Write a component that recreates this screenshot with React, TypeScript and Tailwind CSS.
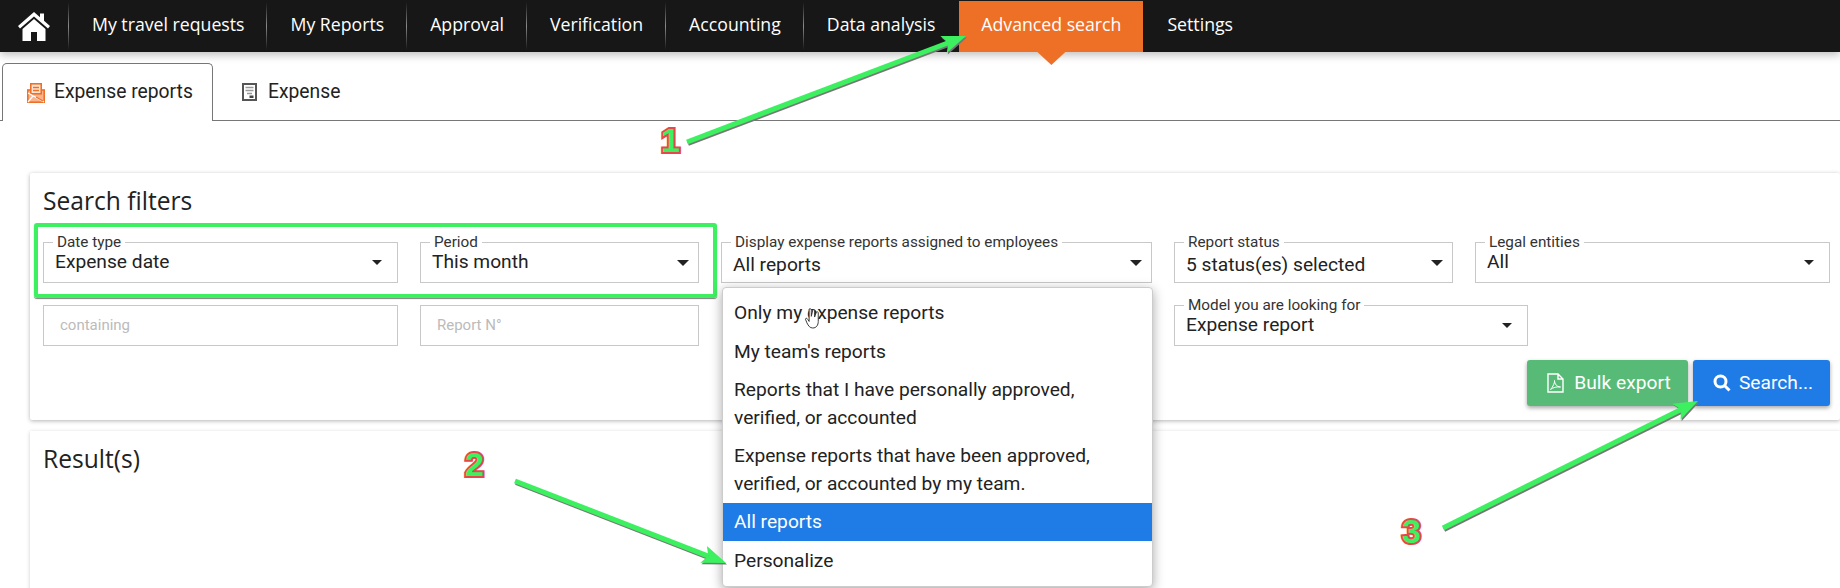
const navItems = ["My travel requests", "My Reports", "Approval", "Verification", "Accounting", "Data analysis"];

function Separator() {
  return <span className="my-[2px] w-px bg-linear-to-b from-transparent via-[#8a8a8a] to-transparent" />;
}

function SelectField({ label, value, className, small, low }: { label: string; value: string; className: string; small?: boolean; low?: boolean }) {
  return (
    <div className={"relative h-[41px] shrink-0 border border-[#c8c8c8] bg-white pl-[11px] " + (small ? "pr-[15px] " : "pr-[9px] ") + className}>
      <span className="absolute left-[9px] top-[-9px] bg-white px-[4px] text-[15.3px] leading-[16px] text-[#333]">{label}</span>
      <div className="flex h-full items-center justify-between text-[19.2px] text-[#222]">
        <span className={low ? "pt-[5px]" : ""}>{value}</span>
        <span className={small ? "border-x-[5px] border-t-[5px] border-x-transparent border-t-[#222]" : "border-x-[6px] border-t-[6px] border-x-transparent border-t-[#222]"} />
      </div>
    </div>
  );
}

function NumberMark({ n, className }: { n: string; className: string }) {
  return (
    <span className={"absolute z-20 font-bold text-[34px] leading-none text-[#3df05f] font-['Liberation_Sans',sans-serif] [-webkit-text-stroke:4px_#e8464a] [paint-order:stroke_fill] " + className}>{n}</span>
  );
}

function Arrow({ x1, y1, x2, y2 }: { x1: number; y1: number; x2: number; y2: number }) {
  const angle = Math.atan2(y2 - y1, x2 - x1);
  const len = 24;
  const ax = x2 - len * Math.cos(angle);
  const ay = y2 - len * Math.sin(angle);
  const nx = -Math.sin(angle) * 9;
  const ny = Math.cos(angle) * 9;
  const bx = x2 - (len - 5) * Math.cos(angle);
  const by = y2 - (len - 5) * Math.sin(angle);
  const head = (dx: number, dy: number) =>
    `${x2 + dx},${y2 + dy} ${ax + nx + dx},${ay + ny + dy} ${bx + dx},${by + dy} ${ax - nx + dx},${ay - ny + dy}`;
  return (
    <g>
      <line x1={x1 + 1} y1={y1 + 1.5} x2={bx + 1} y2={by + 1.5} stroke="#777" strokeWidth="5" />
      <polygon points={head(1, 1.5)} fill="#777" />
      <line x1={x1} y1={y1} x2={bx} y2={by} stroke="#3df05f" strokeWidth="5" />
      <polygon points={head(0, 0)} fill="#3df05f" />
    </g>
  );
}

export default function App() {
  return (
    <div className="relative h-[588px] w-[1840px] overflow-hidden bg-white font-['Roboto',sans-serif] text-[#222]">
      <nav className="relative z-10 flex h-[52px] items-stretch bg-[#171717] font-['Open_Sans',sans-serif] text-[17.7px] text-white shadow-[0_3px_8px_rgba(0,0,0,0.25)]">
        <div className="flex w-[68px] items-center justify-center">
          <svg width="34" height="30" viewBox="0 0 34 30" fill="white">
            <path d="M17 1 L1 15 L3 17.5 L17 5.5 L31 17.5 L33 15 L27 9.8 V2.5 H23 V6.3 Z" />
            <path d="M17 8 L5.5 18 V30 H14 V21 H20 V30 H28.5 V18 Z" />
          </svg>
        </div>
        <Separator />
        {navItems.map((item, i) => (
          <div key={item} className="contents">
            <div className="flex items-center pb-[4px] pl-[23px] pr-[22px]">{item}</div>
            {i < navItems.length - 1 && <Separator />}
          </div>
        ))}
        <div className="relative ml-[2px] mt-[1px] flex items-center bg-[#ee7027] px-[22px] pb-[4px]">
          Advanced search
          <span className="absolute left-1/2 top-full h-[13px] w-[28px] -translate-x-1/2 bg-[#ee7027] [clip-path:polygon(0_0,100%_0,50%_100%)]" />
        </div>
        <div className="flex items-center pb-[4px] pl-[24px] pr-[23px]">Settings</div>
      </nav>

      <div className="flex h-[69px] items-end border-b border-[#777] pl-[2px] text-[19.3px]">
        <div className="mb-[-1px] flex h-[58px] w-[211px] items-center gap-[9px] rounded-t-[5px] border border-b-0 border-[#777] bg-white pl-[24px]">
          <svg width="18" height="20" viewBox="0 0 18 20">
            <rect x="0.8" y="7" width="16.4" height="12.2" fill="#f9b48d" stroke="#ee7027" strokeWidth="1.6" />
            <rect x="3.8" y="0.8" width="10.4" height="10" fill="#fde3d3" stroke="#ee7027" strokeWidth="1.6" />
            <path d="M6 4.5 H12 M6 7.5 H12" stroke="#ee7027" strokeWidth="1.4" />
            <path d="M1 10 L10 15 M17 19 L8 14 M1 19 L6 13" fill="none" stroke="#fff" strokeWidth="1.2" />
            <path d="M9 14 L16 18" stroke="#ee7027" strokeWidth="1.2" />
          </svg>
          Expense reports
        </div>
        <div className="mb-[-1px] flex h-[58px] items-center gap-[11px] pl-[29px]">
          <svg width="15" height="18" viewBox="0 0 15 18" fill="none">
            <rect x="1" y="1" width="13" height="16" stroke="#555" strokeWidth="2" />
            <path d="M3.5 4.5 H11.5 M3.5 7.5 H11.5 M5 10.5 H10" stroke="#999" strokeWidth="1.6" />
            <rect x="7.5" y="12.5" width="4" height="2.5" fill="#444" />
          </svg>
          Expense
        </div>
      </div>

      <section className="mb-[11px] ml-[30px] mt-[52px] h-[247px] rounded-[2px] bg-white pl-[13px] pr-[10px] pt-[12px] shadow-[0_1px_4px_rgba(0,0,0,0.3)]">
        <h2 className="font-['Open_Sans',sans-serif] text-[24.6px] leading-[32px]">Search filters</h2>
        <div className="mt-[25px] flex">
          <SelectField label="Date type" value="Expense date" className="w-[355px]" small />
          <SelectField label="Period" value="This month" className="ml-[22px] w-[279px]" />
          <SelectField label="Display expense reports assigned to employees" value="All reports" className="ml-[22px] w-[431px]" low />
          <SelectField label="Report status" value="5 status(es) selected" className="ml-[22px] w-[279px]" low />
          <SelectField label="Legal entities" value="All" className="ml-[22px] w-[355px]" small />
        </div>
        <div className="mt-[22px] flex">
          <div className="flex h-[41px] w-[355px] shrink-0 items-center border border-[#c8c8c8] px-[16px] text-[15px] text-[#bbb]">containing</div>
          <div className="ml-[22px] flex h-[41px] w-[279px] shrink-0 items-center border border-[#c8c8c8] px-[16px] text-[15px] text-[#bbb]">Report N°</div>
          <SelectField label="Model you are looking for" value="Expense report" className="ml-[475px] w-[354px]" small />
        </div>
        <div className="mt-[14px] flex justify-end gap-[5px] text-[19.2px] text-white">
          <button className="flex h-[46px] w-[161px] items-center justify-center gap-[10px] rounded-[3px] bg-[#57bb77] pl-[3px] shadow-[0_2px_4px_rgba(0,0,0,0.35)]">
            <svg width="17" height="20" viewBox="0 0 17 20" fill="none" stroke="white" strokeWidth="1.4">
              <path d="M1 1 H11 L16 6 V19 H1 Z M11 1 V6 H16" />
              <path d="M3.5 16.5 C6 14 8 9 7.5 7.5 C7.5 11 10 14 13.5 14 C10 13.5 6 14.5 3.5 16.5 Z" strokeWidth="1" />
            </svg>
            Bulk export
          </button>
          <button className="flex h-[46px] w-[137px] items-center justify-center gap-[8px] rounded-[3px] bg-[#1f7ce6] pl-[3px] shadow-[0_2px_4px_rgba(0,0,0,0.35)]">
            <svg width="18" height="18" viewBox="0 0 18 18" fill="none" stroke="white" strokeWidth="3">
              <circle cx="7.5" cy="7.5" r="5.5" />
              <path d="M11.5 11.5 L16.5 16.5" />
            </svg>
            Search...
          </button>
        </div>
      </section>

      <section className="ml-[30px] h-[200px] bg-white pl-[13px] pt-[12px] shadow-[0_1px_4px_rgba(0,0,0,0.2)]">
        <h2 className="font-['Open_Sans',sans-serif] text-[24.6px] leading-[32px]">Result(s)</h2>
      </section>

      <div className="absolute left-[34px] top-[223px] h-[75px] w-[683px] rounded-[3px] border-[4px] border-[#3df05f] shadow-[0_1px_1px_rgba(0,0,0,0.5)]" />

      <ul className="absolute left-[722px] top-[287px] w-[431px] rounded-[4px] border border-[#ccc] bg-white pt-[7px] text-[19.2px] leading-[28px] text-[#222] shadow-[0_3px_12px_rgba(0,0,0,0.35)]">
        <li className="px-[11px] pb-[6px] pt-[4px]">Only my expense reports</li>
        <li className="px-[11px] py-[5px]">My team's reports</li>
        <li className="px-[11px] py-[5px]">Reports that I have personally approved,<br />verified, or accounted</li>
        <li className="px-[11px] py-[5px]">Expense reports that have been approved,<br />verified, or accounted by my team.</li>
        <li className="bg-[#1f7ce6] px-[11px] py-[5px] text-white">All reports</li>
        <li className="h-[45px] px-[11px] pt-[6px]">Personalize</li>
      </ul>

      <svg className="absolute left-[804px] top-[306px]" width="19" height="25" viewBox="0 0 26 30" fill="white" stroke="#333" strokeWidth="1.3">
        <path d="M7 2 C9 1 10 2 10 4 V12 L12 3.5 C13 2.5 14.5 3 14.5 4.5 V13 L17 6 C18 5 19.5 6 19.5 7.5 V19 C19.5 24 17 28 12 28 C8 28 6 25 4 21 L2 16 C2 14.5 4 14 5 16 L7 19 Z" />
      </svg>

      <svg className="absolute inset-0 z-20" width="1840" height="588">
        <Arrow x1={687} y1={142} x2={966} y2={36} />
        <Arrow x1={515} y1={481} x2={726} y2={563} />
        <Arrow x1={1443} y1={528} x2={1698} y2={401} />
      </svg>
      <NumberMark n="1" className="left-[661px] top-[123px]" />
      <NumberMark n="2" className="left-[465px] top-[447px]" />
      <NumberMark n="3" className="left-[1402px] top-[514px]" />
    </div>
  );
}
